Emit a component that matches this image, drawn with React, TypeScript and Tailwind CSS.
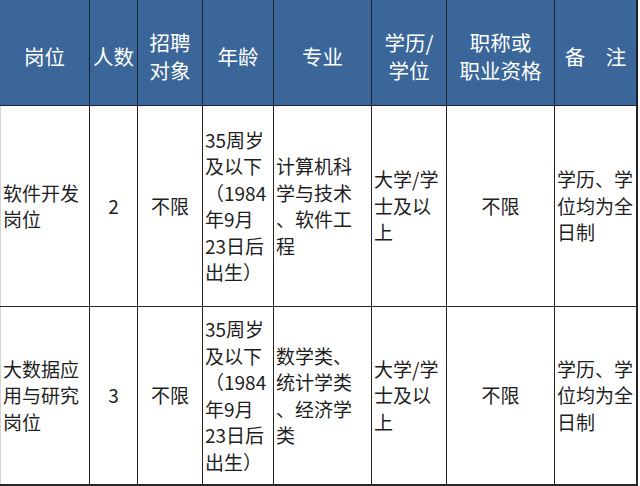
import React from "react";

const font = {
  fontFamily: '"Noto Sans CJK SC", "Noto Sans", sans-serif',
};

type Align = "left" | "center";

function Lines({ lines }: { lines: string[] }) {
  return (
    <div>
      {lines.map((l, i) => (
        <div key={i} className="whitespace-pre">
          {l}
        </div>
      ))}
    </div>
  );
}

function HeadCell({ lines, last }: { lines: string[]; last?: boolean }) {
  return (
    <div
      className={`flex items-center justify-center text-center bg-[#3a6699] text-white text-[20.5px] leading-[27.5px] font-normal pt-2 border-b border-[#1c2230] ${
        last ? "border-r-2" : "border-r"
      }`}
    >
      <Lines lines={lines} />
    </div>
  );
}

function BodyCell({
  lines,
  align,
  last,
  first,
  bottom,
}: {
  lines: string[];
  align: Align;
  last?: boolean;
  first?: boolean;
  bottom?: boolean;
}) {
  return (
    <div
      className={`flex items-center bg-white text-[#1e1e1e] text-[19px] leading-[26.5px] border-[#262626] ${
        bottom ? "border-b-2" : "border-b"
      } ${last ? "border-r-2" : "border-r"} ${
        align === "center" ? "justify-center text-center" : "justify-start text-left pl-[2px]"
      } ${first ? "pl-[3px] shadow-[inset_1px_0_0_#d4d4d4]" : ""}`}
    >
      <Lines lines={lines} />
    </div>
  );
}

const header: string[][] = [
  ["岗位"],
  ["人数"],
  ["招聘", "对象"],
  ["年龄"],
  ["专业"],
  ["学历/", "学位"],
  ["职称或", "职业资格"],
  ["备　注"],
];

const aligns: Align[] = ["left", "center", "center", "left", "left", "left", "center", "left"];

const rows: string[][][] = [
  [
    ["软件开发", "岗位"],
    ["2"],
    ["不限"],
    ["35周岁", "及以下", "（1984", "年9月", "23日后", "出生）"],
    ["计算机科", "学与技术", "、软件工", "程"],
    ["大学/学", "士及以", "上"],
    ["不限"],
    ["学历、学", "位均为全", "日制"],
  ],
  [
    ["大数据应", "用与研究", "岗位"],
    ["3"],
    ["不限"],
    ["35周岁", "及以下", "（1984", "年9月", "23日后", "出生）"],
    ["数学类、", "统计学类", "、经济学", "类"],
    ["大学/学", "士及以", "上"],
    ["不限"],
    ["学历、学", "位均为全", "日制"],
  ],
];

export default function App() {
  return (
    <div className="w-[640px] h-[486px] bg-white overflow-hidden" style={font}>
      <div className="grid w-[638px] grid-cols-[90px_48px_65px_71px_98px_75px_108px_83px] grid-rows-[106px_201px_179px]">
        {header.map((h, i) => (
          <HeadCell key={i} lines={h} last={i === header.length - 1} />
        ))}
        {rows.map((r, ri) =>
          r.map((c, ci) => (
            <BodyCell
              key={`${ri}-${ci}`}
              lines={c}
              align={aligns[ci]}
              first={ci === 0}
              last={ci === r.length - 1}
              bottom={ri === rows.length - 1}
            />
          ))
        )}
      </div>
    </div>
  );
}
